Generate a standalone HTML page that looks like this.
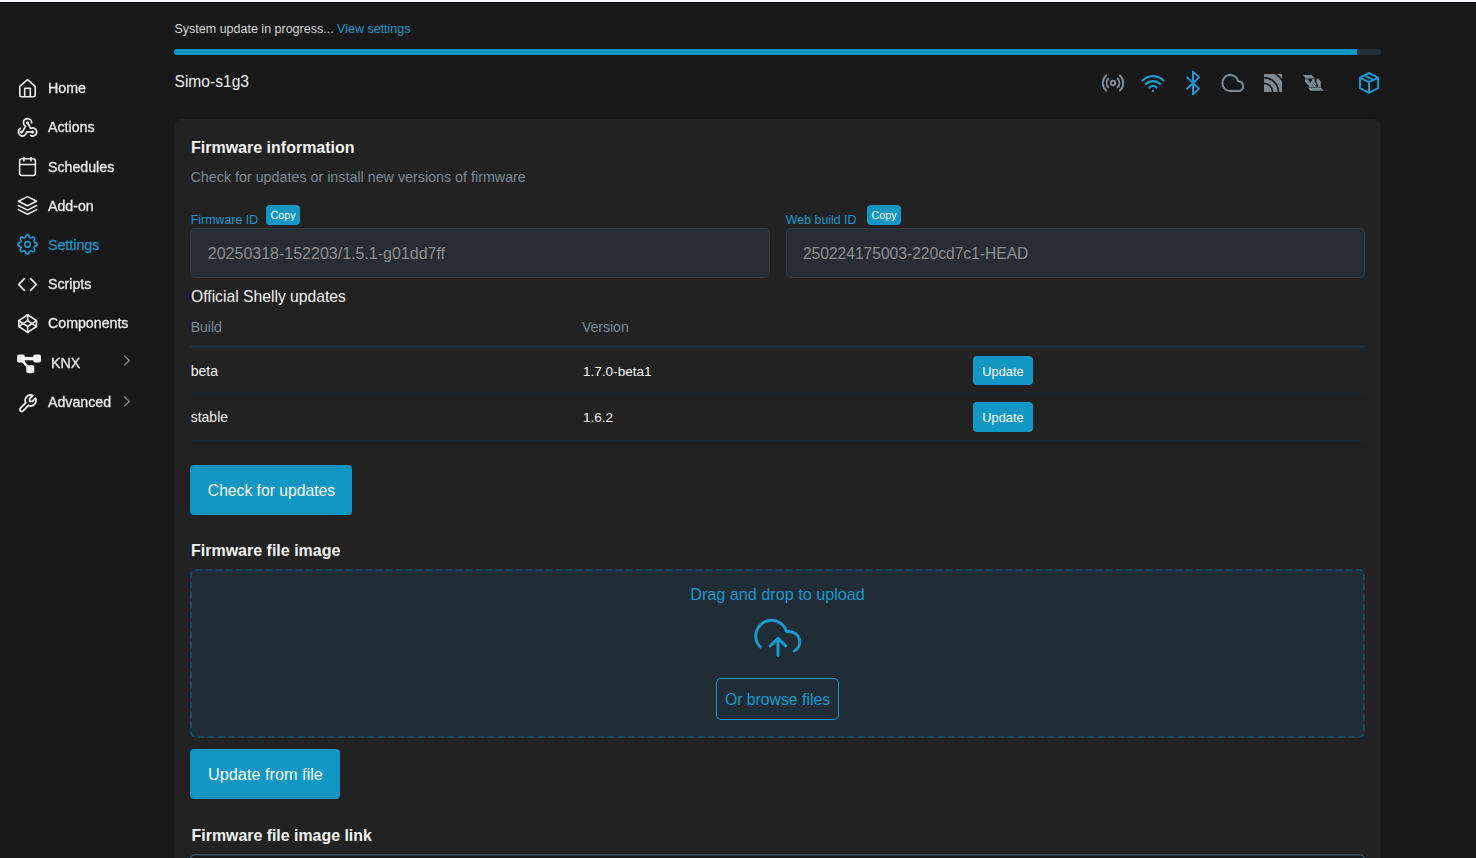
<!DOCTYPE html>
<html><head><meta charset="utf-8"><title>Firmware</title>
<style>
html,body{margin:0;padding:0;background:#181818;width:1476px;height:858px;overflow:hidden;}
body{position:relative;font-family:"Liberation Sans",sans-serif;}
.t{position:absolute;white-space:nowrap;}
.b{position:absolute;box-sizing:border-box;}
.ov{position:absolute;left:0;top:0;}
</style></head><body>
<div class="b" style="left:0px;top:0px;width:1476px;height:2px;background:#f8f8fe;"></div><div class="b" style="left:0px;top:2px;width:1476px;height:1px;background:#080808;"></div><div class="t" style="left:174.5px;top:19px;font-size:12.5px;line-height:20px;color:#d6d6d6;font-weight:400;">System update in progress... <span style="color:#1898cc">View settings</span></div><div class="b" style="left:174px;top:49px;width:1207px;height:6px;background:#25303a;border-radius:3px;"></div><div class="b" style="left:174px;top:49px;width:1183px;height:6px;background:#1296c4;border-radius:3px 0 0 3px;"></div><div class="t" style="left:174.5px;top:72px;font-size:15.6px;line-height:20px;color:#f2f2f2;font-weight:400;">Simo-s1g3</div><div class="t" style="left:47.8px;top:78px;font-size:14.2px;line-height:20px;color:#ececec;font-weight:400;-webkit-text-stroke:0.3px #ececec;will-change:transform;">Home</div><div class="t" style="left:47.8px;top:117px;font-size:14.2px;line-height:20px;color:#ececec;font-weight:400;-webkit-text-stroke:0.3px #ececec;will-change:transform;">Actions</div><div class="t" style="left:47.8px;top:157px;font-size:14.2px;line-height:20px;color:#ececec;font-weight:400;-webkit-text-stroke:0.3px #ececec;will-change:transform;">Schedules</div><div class="t" style="left:47.8px;top:196px;font-size:14.2px;line-height:20px;color:#ececec;font-weight:400;-webkit-text-stroke:0.3px #ececec;will-change:transform;">Add-on</div><div class="t" style="left:47.8px;top:235px;font-size:14.2px;line-height:20px;color:#1898cc;font-weight:400;-webkit-text-stroke:0.3px #1898cc;will-change:transform;">Settings</div><div class="t" style="left:47.8px;top:274px;font-size:14.2px;line-height:20px;color:#ececec;font-weight:400;-webkit-text-stroke:0.3px #ececec;will-change:transform;">Scripts</div><div class="t" style="left:47.8px;top:313px;font-size:14.2px;line-height:20px;color:#ececec;font-weight:400;-webkit-text-stroke:0.3px #ececec;will-change:transform;">Components</div><div class="t" style="left:51.3px;top:353px;font-size:14.2px;line-height:20px;color:#ececec;font-weight:400;-webkit-text-stroke:0.3px #ececec;will-change:transform;">KNX</div><div class="t" style="left:47.8px;top:392px;font-size:14.2px;line-height:20px;color:#ececec;font-weight:400;-webkit-text-stroke:0.3px #ececec;will-change:transform;">Advanced</div><div class="b" style="left:174px;top:119px;width:1207px;height:759px;background:#222222;border-radius:8px;"></div><div class="t" style="left:191px;top:138px;font-size:16px;line-height:20px;color:#f2f2f2;font-weight:700;">Firmware information</div><div class="t" style="left:190.5px;top:167px;font-size:14.3px;line-height:20px;color:#7e8a94;font-weight:400;">Check for updates or install new versions of firmware</div><div class="t" style="left:190.7px;top:210px;font-size:12.4px;line-height:20px;color:#1898cc;font-weight:400;">Firmware ID</div><div class="b" style="left:266px;top:205px;width:34px;height:20px;background:#1296c4;border-radius:4px;"></div><div class="t" style="left:-17px;width:600px;text-align:center;top:205px;font-size:10.8px;line-height:20px;color:#ffffff;font-weight:400;">Copy</div><div class="b" style="left:190px;top:228px;width:580px;height:50px;background:#262d35;border-radius:5px;box-shadow:inset 0 0 0 1px #313942;"></div><div class="t" style="left:207.8px;top:244px;font-size:16px;line-height:20px;color:#8e8e8e;font-weight:400;">20250318-152203/1.5.1-g01dd7ff</div><div class="t" style="left:785.8px;top:210px;font-size:12.4px;line-height:20px;color:#1898cc;font-weight:400;">Web build ID</div><div class="b" style="left:867px;top:205px;width:34px;height:20px;background:#1296c4;border-radius:4px;"></div><div class="t" style="left:584px;width:600px;text-align:center;top:205px;font-size:10.8px;line-height:20px;color:#ffffff;font-weight:400;">Copy</div><div class="b" style="left:786px;top:228px;width:579px;height:50px;background:#262d35;border-radius:5px;box-shadow:inset 0 0 0 1px #313942;"></div><div class="t" style="left:802.9px;top:244px;font-size:15.6px;line-height:20px;color:#8e8e8e;font-weight:400;">250224175003-220cd7c1-HEAD</div><div class="t" style="left:191px;top:287px;font-size:15.7px;line-height:20px;color:#f2f2f2;font-weight:400;">Official Shelly updates</div><div class="t" style="left:190.7px;top:317px;font-size:14px;line-height:20px;color:#7e8a94;font-weight:400;">Build</div><div class="t" style="left:582px;top:317px;font-size:14px;line-height:20px;color:#7e8a94;font-weight:400;">Version</div><div class="b" style="left:190px;top:345px;width:1175px;height:3px;background:#1f2d3a;"></div><div class="t" style="left:190.7px;top:361px;font-size:14px;line-height:20px;color:#f2f2f2;font-weight:400;">beta</div><div class="t" style="left:582.9px;top:362px;font-size:13.6px;line-height:20px;color:#f2f2f2;font-weight:400;">1.7.0-beta1</div><div class="b" style="left:973px;top:356px;width:60px;height:29px;background:#1296c4;border-radius:4px;"></div><div class="t" style="left:703px;width:600px;text-align:center;top:362px;font-size:12.8px;line-height:20px;color:#ffffff;font-weight:400;">Update</div><div class="b" style="left:190px;top:393px;width:1175px;height:1px;background:#1f2831;"></div><div class="t" style="left:190.7px;top:407px;font-size:14px;line-height:20px;color:#f2f2f2;font-weight:400;">stable</div><div class="t" style="left:582.9px;top:408px;font-size:13.6px;line-height:20px;color:#f2f2f2;font-weight:400;">1.6.2</div><div class="b" style="left:973px;top:402px;width:60px;height:30px;background:#1296c4;border-radius:4px;"></div><div class="t" style="left:703px;width:600px;text-align:center;top:408px;font-size:12.8px;line-height:20px;color:#ffffff;font-weight:400;">Update</div><div class="b" style="left:190px;top:440px;width:1175px;height:1px;background:#1f2831;"></div><div class="b" style="left:190px;top:465px;width:162px;height:50px;background:#1296c4;border-radius:4px;"></div><div class="t" style="left:207.8px;top:481px;font-size:15.7px;line-height:20px;color:#ffffff;font-weight:400;">Check for updates</div><div class="t" style="left:191px;top:541px;font-size:16px;line-height:20px;color:#f2f2f2;font-weight:700;">Firmware file image</div><div class="b" style="left:190px;top:569px;width:1175px;height:169px;background:#202c36;border-radius:5px;"></div><div class="t" style="left:477.5px;width:600px;text-align:center;top:584px;font-size:16.2px;line-height:20px;color:#1898cc;font-weight:400;">Drag and drop to upload</div><div class="b" style="left:716px;top:678px;width:123px;height:42px;background:transparent;border-radius:5px;box-shadow:inset 0 0 0 1px #1898cc;"></div><div class="t" style="left:477.5px;width:600px;text-align:center;top:690px;font-size:15.75px;line-height:20px;color:#1898cc;font-weight:400;">Or browse files</div><div class="b" style="left:190px;top:749px;width:150px;height:50px;background:#1296c4;border-radius:4px;"></div><div class="t" style="left:208px;top:764px;font-size:16.3px;line-height:20px;color:#ffffff;font-weight:400;">Update from file</div><div class="t" style="left:191.6px;top:826px;font-size:15.9px;line-height:20px;color:#f2f2f2;font-weight:700;">Firmware file image link</div><div class="b" style="left:190px;top:854px;width:1175px;height:24px;background:#181818;border-radius:5px;box-shadow:inset 0 0 0 1.5px #3d5162;"></div>
<svg class="ov" width="1476" height="858" viewBox="0 0 1476 858"><rect x="191" y="570" width="1173" height="167" rx="5" ry="5" fill="none" stroke="#184c66" stroke-width="2" stroke-dasharray="6 4"/><path d="M19.8 95.2 V86.4 L27.5 79.6 L35.2 86.4 V95.2 Q35.2 96.8 33.6 96.8 H21.4 Q19.8 96.8 19.8 95.2 Z M24.7 96.8 V88.2 H30.3 V96.8" fill="none" stroke="#ececec" stroke-width="1.6" stroke-linecap="round" stroke-linejoin="round" /><g transform="translate(15.3 114.6) scale(1.02)"><path d="M4.876 13.61a4 4 0 1 0 6.124 3.39h6 M15.066 20.502a4 4 0 1 0 1.934 -7.502c-.706 0 -1.424 .179 -2 .5l-3 -5.5 M16 8a4 4 0 1 0 -8 0c0 1.506 .77 2.818 2 3.5l-3 5.5" fill="none" stroke="#ececec" stroke-width="1.7" stroke-linecap="round" stroke-linejoin="round"/><circle cx="12" cy="8" r="1.5" fill="#ececec"/><circle cx="6" cy="17" r="1.5" fill="#ececec"/><circle cx="17" cy="17" r="1.5" fill="#ececec"/></g><path d="M19.6 161 Q19.6 158.8 21.8 158.8 H33.2 Q35.4 158.8 35.4 161 V173.2 Q35.4 175.4 33.2 175.4 H21.8 Q19.6 175.4 19.6 173.2 Z M19.6 164.4 H35.4 M23.9 157.6 V161 M31 157.6 V161" fill="none" stroke="#ececec" stroke-width="1.5" stroke-linecap="round" stroke-linejoin="round" /><path d="M27.5 196.6 L36.6 201.2 L27.5 205.8 L18.4 201.2 Z M18.4 205.5 L27.5 210.1 L36.6 205.5 M18.4 209.6 L27.5 214.2 L36.6 209.6" fill="none" stroke="#ececec" stroke-width="1.6" stroke-linecap="round" stroke-linejoin="round" /><path d="M24.77 237.93 L25.74 236.99 C25.27 234.13 29.63 234.13 29.16 236.99 L30.13 237.93 L31.48 237.95 C33.17 235.59 36.26 238.68 33.90 240.37 L33.92 241.72 L34.86 242.69 C37.72 242.22 37.72 246.58 34.86 246.11 L33.92 247.08 L33.90 248.43 C36.26 250.12 33.17 253.21 31.48 250.85 L30.13 250.87 L29.16 251.81 C29.63 254.67 25.27 254.67 25.74 251.81 L24.77 250.87 L23.42 250.85 C21.73 253.21 18.64 250.12 21.00 248.43 L20.98 247.08 L20.04 246.11 C17.18 246.58 17.18 242.22 20.04 242.69 L20.98 241.72 L21.00 240.37 C18.64 238.68 21.73 235.59 23.42 237.95 L24.77 237.93 Z" fill="none" stroke="#1898cc" stroke-width="1.6" stroke-linecap="round" stroke-linejoin="round" /><circle cx="27.45" cy="244.4" r="2.8" fill="none" stroke="#1898cc" stroke-width="1.6"/><path d="M24.4 278.6 L18.6 284.5 L24.4 290.3 M30.6 278.6 L36.4 284.5 L30.6 290.3" fill="none" stroke="#ececec" stroke-width="1.7" stroke-linecap="round" stroke-linejoin="round" /><path d="M18.84 326.50 L27.66 332.38 L36.48 326.50 L27.66 320.62 Z" fill="none" stroke="#ececec" stroke-width="1.6" stroke-linecap="round" stroke-linejoin="round" /><path d="M18.84 320.62 L27.66 326.50 L36.48 320.62 L27.66 314.74 Z" fill="none" stroke="#ececec" stroke-width="1.6" stroke-linecap="round" stroke-linejoin="round" /><path d="M18.84 320.62 L18.84 326.50 M36.48 320.62 L36.48 326.50 M27.66 314.74 L27.66 320.62 M27.66 326.50 L27.66 332.38" fill="none" stroke="#ececec" stroke-width="1.6" stroke-linecap="round" stroke-linejoin="round" /><rect x="17.1" y="354.6" width="7.699999999999999" height="8.0" rx="1.8" fill="#f4f4f4"/><rect x="33.3" y="354.6" width="7.700000000000003" height="8.0" rx="1.8" fill="#f4f4f4"/><rect x="26.3" y="365.2" width="7.9999999999999964" height="8.0" rx="1.8" fill="#f4f4f4"/><path d="M24 358.6 H34" stroke="#f4f4f4" stroke-width="3.4"/><path d="M22.6 361 L28.2 367.5" stroke="#f4f4f4" stroke-width="2.6"/><g transform="translate(38.5 392.4) scale(-0.88 0.9)"><path d="M7 10h3v-3l-3.5 -3.5a6 6 0 0 1 8 8l6 6a2 2 0 0 1 -3 3l-6 -6a6 6 0 0 1 -8 -8l3.5 3.5" fill="none" stroke="#ececec" stroke-width="2.1" stroke-linecap="round" stroke-linejoin="round"/></g><path d="M124.6 356 L129.4 360.4 L124.6 364.8" fill="none" stroke="#7e8b95" stroke-width="1.3" stroke-linecap="round" stroke-linejoin="round" /><path d="M124.6 397 L129.4 401.4 L124.6 405.8" fill="none" stroke="#7e8b95" stroke-width="1.3" stroke-linecap="round" stroke-linejoin="round" /><circle cx="1113" cy="83" r="2.2" fill="none" stroke="#7e8b95" stroke-width="2"/><path d="M1108.24 87.28 A6.4 6.4 0 0 1 1108.24 78.72 M1117.76 78.72 A6.4 6.4 0 0 1 1117.76 87.28" fill="none" stroke="#7e8b95" stroke-width="2" stroke-linecap="round" stroke-linejoin="round" /><path d="M1106.17 90.58 A10.2 10.2 0 0 1 1106.17 75.42 M1119.83 75.42 A10.2 10.2 0 0 1 1119.83 90.58" fill="none" stroke="#7e8b95" stroke-width="2" stroke-linecap="round" stroke-linejoin="round" /><g transform="translate(1138.2 68.76) scale(1.23)"><path d="M12 18l.01 0 M9.172 15.172a4 4 0 0 1 5.656 0 M6.343 12.343a8 8 0 0 1 11.314 0 M3.515 9.515c4.686 -4.687 12.284 -4.687 17 0" fill="none" stroke="#1898cc" stroke-width="1.9" stroke-linecap="round" stroke-linejoin="round"/></g><path d="M1187 77.2 L1199 88.6 L1193 94.4 V71.6 L1199 77.4 L1187 88.8" fill="none" stroke="#1898cc" stroke-width="2" stroke-linecap="round" stroke-linejoin="round" /><path d="M1230.3 91 A8 8 0 1 1 1238.1 81.2 A5 5 0 0 1 1239.5 91 Z" fill="none" stroke="#7e8b95" stroke-width="2" stroke-linecap="round" stroke-linejoin="round" /><defs><clipPath id="sq"><rect x="1264" y="74" width="18" height="18"/></clipPath></defs><g clip-path="url(#sq)"><rect x="1264" y="74" width="18" height="18" fill="#7e8b95"/><circle cx="1264" cy="92" r="8.6" fill="none" stroke="#181818" stroke-width="1.6"/><circle cx="1264" cy="92" r="14.4" fill="none" stroke="#181818" stroke-width="1.6"/><circle cx="1264" cy="92" r="21.4" fill="none" stroke="#181818" stroke-width="1.6"/></g><g><path d="M1305 79.2 L1307.9 79.2 L1311.4 84.4 L1310 86.9 L1305 81.4 Z" fill="#7e8b95"/><path d="M1312.3 79.2 L1315.3 79.2 L1311.5 86.9 L1308.7 86.9 Z" fill="#7e8b95"/><path d="M1314.6 80.6 L1317.1 86.9 L1311.8 86.9 Z" fill="#7e8b95"/><path d="M1317.7 78.3 L1320.8 81.3 L1320.8 86.9 L1318.3 86.9 L1316.1 80.1 Z" fill="#7e8b95"/><path d="M1313.3 83.2 L1316.4 86.6" stroke="#181818" stroke-width="0.9"/><path d="M1302.9 75.1 H1311.7 L1315 78.5 H1305.6 Z" fill="#7e8b95"/><path d="M1308 87.6 H1320.8 L1323.8 90.7 H1310.3 Z" fill="#7e8b95"/></g><path d="M1369 73 L1378.1 77.7 V88.2 L1369 92.9 L1360 88.2 V77.7 Z M1360 77.7 L1369 82.2 L1378.1 77.7 M1369 82.2 V92.9 M1364.6 75.4 L1373.2 79.9" fill="none" stroke="#1898cc" stroke-width="2" stroke-linecap="round" stroke-linejoin="round" /><path d="M760.11 646.81 A15.7 15.7 0 1 1 786.47 631.28 L789.5 631.8" fill="none" stroke="#1898cc" stroke-width="3" stroke-linecap="round" stroke-linejoin="round" /><path d="M789.5 631.8 A10.2 10.2 0 0 1 794.4 651" fill="none" stroke="#1898cc" stroke-width="3" stroke-linecap="round" stroke-linejoin="round" /><path d="M778 655.3 V638.6 M770.2 645.8 L778 638.4 L785.8 645.8" fill="none" stroke="#1898cc" stroke-width="3" stroke-linecap="round" stroke-linejoin="round" /></svg>
</body></html>
